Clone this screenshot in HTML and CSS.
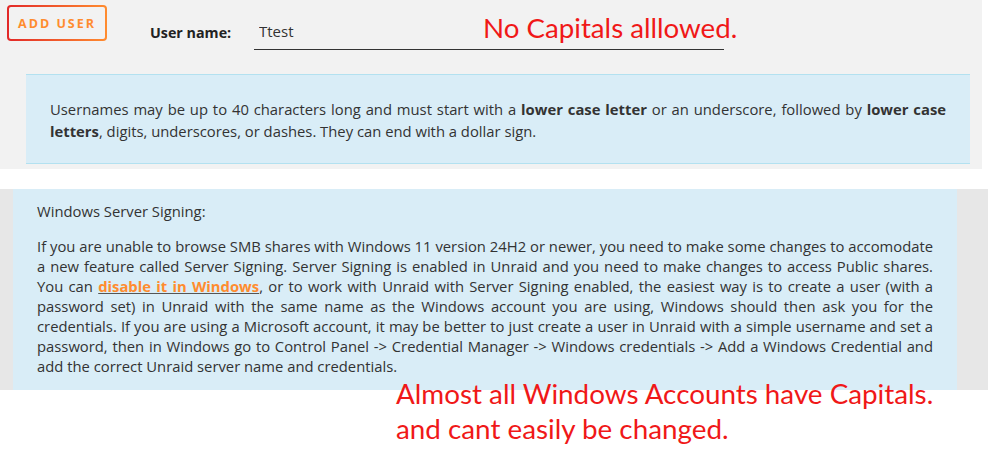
FILE: index.html
```html
<!DOCTYPE html>
<html lang="en">
<head>
  <meta charset="UTF-8" />
  <meta name="viewport" content="width=device-width, initial-scale=1">
  <title>Add User</title>
  <link rel="stylesheet" href="styles.css">
</head>
<body>

<div class="page">
  <div class="top-panel">
    <div class="form-row">
      <button class="add-btn" type="button">ADD USER</button>
      <label for="username">User name:</label>
      <input type="text" id="username" value="Ttest" />
    </div>

    <div class="info">
      <p>Usernames may be up to 40 characters long and must start with a <b>lower case letter</b> or an underscore, followed by <b>lower case letters</b>, digits, underscores, or dashes. They can end with a dollar sign.</p>
    </div>
  </div>

  <div class="signing-panel">
    <div class="signing-box">
      <p>Windows Server Signing:</p>
      <p>If you are unable to browse SMB shares with Windows 11 version 24H2 or newer, you need to make some changes to accomodate a new feature called Server Signing. Server Signing is enabled in Unraid and you need to make changes to access Public shares. You can <a href="#">disable it in Windows</a>, or to work with Unraid with Server Signing enabled, the easiest way is to create a user (with a password set) in Unraid with the same name as the Windows account you are using, Windows should then ask you for the credentials. If you are using a Microsoft account, it may be better to just create a user in Unraid with a simple username and set a password, then in Windows go to Control Panel -&gt; Credential Manager -&gt; Windows credentials -&gt; Add a Windows Credential and add the correct Unraid server name and credentials.</p>
    </div>
  </div>

  <!-- red remarks written over the page -->
  <div class="note note-top">No Capitals alllowed.</div>
  <div class="note note-bottom">Almost all Windows Accounts have Capitals.<br>and cant easily be changed.</div>
</div>

</body>
</html>
```

FILE: styles.css
```css
body {
  font-family: 'Open Sans', sans-serif;
  background-color: #fff;
  color: #333;
  margin: 0;
  padding: 0;
}

p {
  margin: 0;
}

.page {
  position: relative;
  min-height: 464px;
}

.top-panel {
  width: 982px;
  height: 169px;
  box-sizing: border-box;
  padding-top: 5px;
  background-color: #f2f2f2;
}

.form-row {
  display: flex;
  align-items: center;
  height: 36px;
}

.add-btn {
  margin-left: 7px;
  width: 100px;
  height: 36px;
  border: 2px solid transparent;
  border-radius: 4px;
  background:
    linear-gradient(#f2f2f2, #f2f2f2) padding-box,
    linear-gradient(90deg, #e22828, #ff8c2f) border-box;
  color: #ff8c2f;
  font-family: 'Open Sans', sans-serif;
  font-size: 12.5px;
  font-weight: bold;
  letter-spacing: 2px;
  padding-top: 2px;
  cursor: pointer;
}

label {
  margin-left: 43px;
  width: 104px;
  font-weight: bold;
  font-size: 14.3px;
  color: #222;
  padding-top: 18px;
}

input {
  width: 470px;
  box-sizing: border-box;
  margin-top: 24px;
  padding: 0 5px 8px;
  font-family: 'Open Sans', sans-serif;
  font-size: 15px;
  color: #333;
  background: transparent;
  border: none;
  border-bottom: 1px solid #333;
  outline: none;
}

.info {
  margin: 33px 0 0 26px;
  width: 944px;
  box-sizing: border-box;
  padding: 23px 24px 21px;
  background-color: #d9edf7;
  border-top: 1px solid #b3e1f0;
  border-bottom: 1px solid #b3e1f0;
  font-size: 14.8px;
  line-height: 22px;
  text-align: justify;
}

.signing-panel {
  margin-top: 20px;
  width: 988px;
  background-color: #e7e7e7;
}

.signing-box {
  margin-left: 13px;
  width: 944px;
  box-sizing: border-box;
  padding: 12px 24px 14px;
  background-color: #d9edf7;
  font-size: 14.8px;
  line-height: 20px;
  text-align: justify;
}

.signing-box p + p {
  margin-top: 15px;
}

.signing-box a {
  color: #ff8c2f;
  font-weight: bold;
  text-decoration-color: #555;
}

.note {
  position: absolute;
  color: #f01818;
  font-family: 'Lato', sans-serif;
  white-space: nowrap;
}

.note-top {
  left: 483px;
  top: 11px;
  font-size: 27.7px;
}

.note-bottom {
  left: 396px;
  top: 376px;
  font-size: 27.8px;
  line-height: 35px;
}
```
